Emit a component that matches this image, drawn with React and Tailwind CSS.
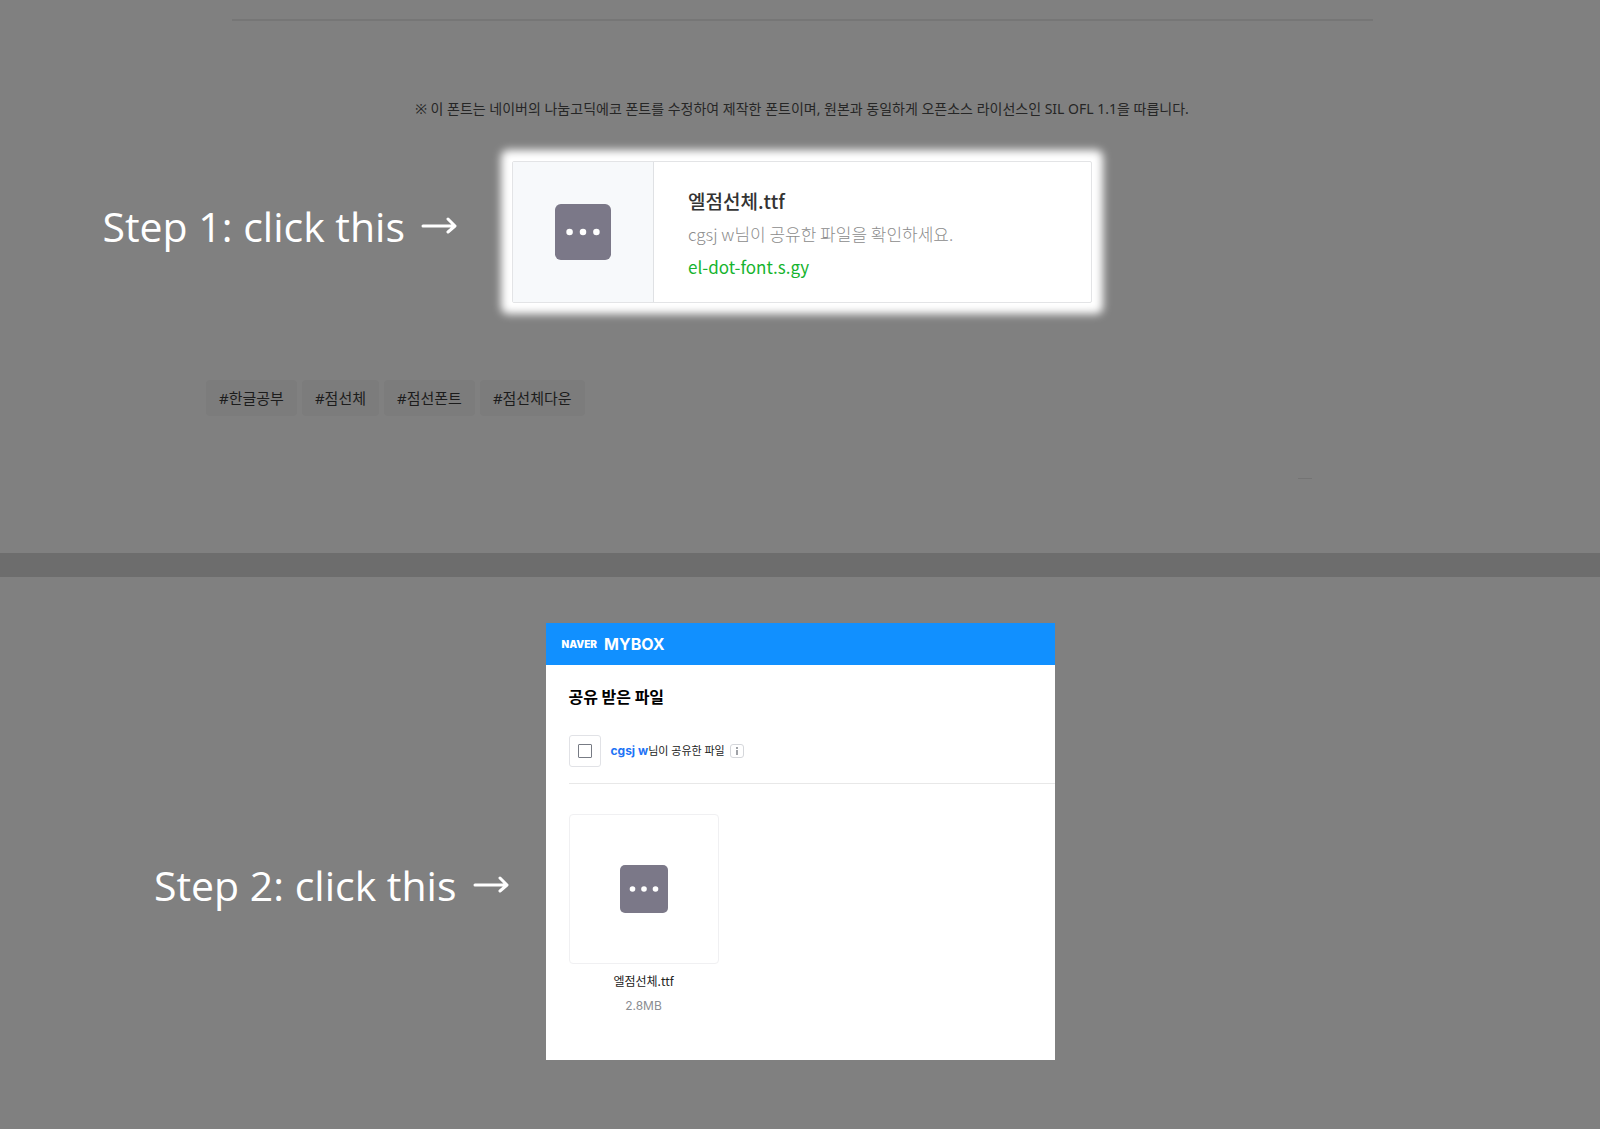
const tags = ['#한글공부', '#점선체', '#점선폰트', '#점선체다운'];

function FileIcon({ className }) {
  return (
    <svg viewBox="0 0 48 48" className={className} aria-hidden="true">
      <rect width="48" height="48" rx="5" fill="#7b7888" />
      <circle cx="12.5" cy="24" r="2.8" fill="#fff" />
      <circle cx="24" cy="24" r="2.8" fill="#fff" />
      <circle cx="35.5" cy="24" r="2.8" fill="#fff" />
    </svg>
  );
}

function StepLabel({ children, className }) {
  return (
    <p className={`flex items-center justify-end gap-4 text-[41px] leading-none font-normal whitespace-nowrap text-white font-['Open_Sans','Noto_Sans',sans-serif] ${className}`}>
      {children}
      <svg viewBox="0 0 36 20" className="h-5 w-9" fill="none" stroke="currentColor" strokeWidth="3" strokeLinecap="round" strokeLinejoin="round" aria-hidden="true">
        <path d="M2 10H33M27 3L34 10L27 16" />
      </svg>
    </p>
  );
}

export default function App() {
  return (
    <div className="min-h-screen bg-[#808080] font-['Noto_Sans_CJK_KR',sans-serif]">
      <section className="pt-[19px] pb-[74px]">
        <hr className="mr-[227px] ml-[232px] h-[2px] border-0 bg-[#767676]" />
        <p className="mt-[78px] pl-1 text-center text-sm leading-5 text-[#262626] font-['Noto_Sans','Noto_Sans_CJK_KR',sans-serif]">
          ※ 이 폰트는 네이버의 나눔고딕에코 폰트를 수정하여 제작한 폰트이며, 원본과 동일하게 오픈소스 라이선스인 SIL OFL 1.1을 따릅니다.
        </p>
        <div className="mt-[42px] grid grid-cols-[1fr_580px_1fr] items-center pl-1">
          <StepLabel className="mr-[55px] pb-3">Step 1: click this</StepLabel>
          <a href="#download" className="flex h-[142px] rounded-[2px] border border-[#e3e4e6] bg-white shadow-[0_0_9px_11px_#fff]">
            <span className="flex w-[141px] items-center justify-center border-r border-[#dfe1e4] bg-[#f7f9fb]">
              <FileIcon className="size-14" />
            </span>
            <span className="flex flex-col justify-center pt-1 pl-[34px]">
              <span className="text-[19px] leading-8 font-medium text-[#333]">엘점선체.ttf</span>
              <span className="text-[17px] leading-[34px] font-light text-[#8c8c8c]">cgsj w님이 공유한 파일을 확인하세요.</span>
              <span className="text-[17px] leading-8 text-[#16b42e]">el-dot-font.s.gy</span>
            </span>
          </a>
        </div>
        <ul className="mt-[77px] ml-[206px] flex gap-[5px]">
          {tags.map((tag) => (
            <li key={tag}>
              <a href="#tags" className="block rounded-sm bg-[#7c7c7c] px-[13px] text-[15px] leading-9 text-[#1c1c1c] font-['Noto_Sans','Noto_Sans_CJK_KR',sans-serif]">{tag}</a>
            </li>
          ))}
        </ul>
        <div className="mt-[62px] mr-[288px] ml-auto h-px w-[14px] bg-[#747474]" />
      </section>
      <div className="h-6 bg-[#6d6d6d]" />
      <section className="grid grid-cols-[1fr_509px_1fr] items-center pt-[46px] pb-[69px]">
        <StepLabel className="mr-[37px] pt-[87px]">Step 2: click this</StepLabel>
        <div className="bg-white pb-[42px]">
          <header className="flex h-[42px] items-center gap-[7px] bg-[#1190ff] pl-4 text-white font-['Inter',sans-serif]">
            <span className="text-[10px] leading-none font-black">NAVER</span>
            <span className="text-base leading-none font-bold">MYBOX</span>
          </header>
          <h1 className="mt-[19px] ml-[23px] text-base leading-6 font-bold text-black">공유 받은 파일</h1>
          <div className="ml-[23px] mt-[27px] flex items-center border-b border-[#e8e8e8] pb-4">
            <label htmlFor="select-all" className="flex size-8 items-center justify-center rounded-[3px] border border-[#e1e2e6]">
              <input id="select-all" type="checkbox" aria-label="전체 선택" className="size-[14px] appearance-none rounded-[1px] border border-[#777b84] bg-white" />
            </label>
            <p className="ml-[10px] text-[11px] leading-4 text-[#222] font-['Noto_Sans','Noto_Sans_CJK_KR',sans-serif]">
              <strong className="text-xs font-bold text-[#1f74f5] font-['Inter',sans-serif]">cgsj w</strong>님이 공유한 파일
            </p>
            <button type="button" aria-label="정보" className="ml-[5px] flex size-[14px] items-center justify-center rounded-[3px] border border-[#d5d7db]">
              <svg viewBox="0 0 4 8" className="h-2 w-1" fill="#a0a3a8"><path d="M1 0h2v2H1zM1 3h2v5H1z" /></svg>
            </button>
          </div>
          <figure className="mt-[30px] ml-[23px] w-[150px] text-center">
            <div className="flex h-[150px] items-center justify-center rounded-[4px] border border-[#f0f0f2]">
              <FileIcon className="size-12" />
            </div>
            <figcaption className="mt-[5px]">
              <span className="block text-xs leading-6 text-[#222]">엘점선체.ttf</span>
              <span className="block text-xs leading-[25px] text-[#8b8d92] font-['Inter',sans-serif]">2.8MB</span>
            </figcaption>
          </figure>
        </div>
      </section>
    </div>
  );
}
